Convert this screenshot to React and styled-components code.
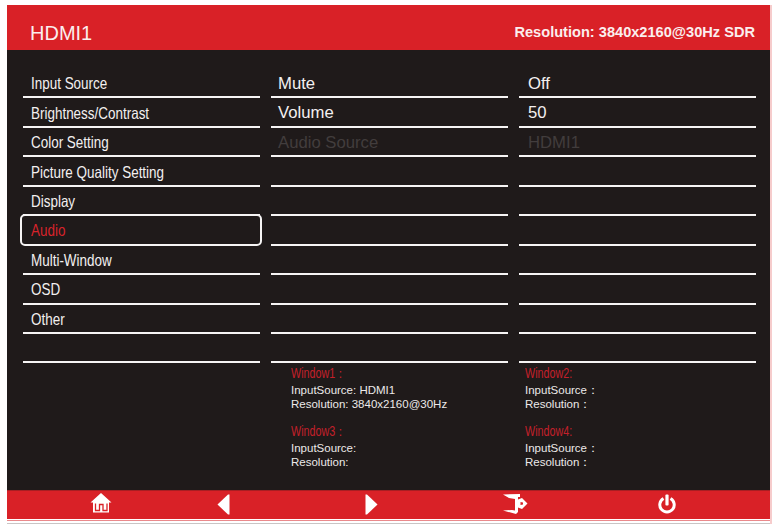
import React from "react"
import styled, { createGlobalStyle } from "styled-components"

const Global = createGlobalStyle`
  html, body {
    margin: 0;
    padding: 0;
    background: #fff;
  }
  body {
    font-family: "Liberation Sans", Arial, sans-serif;
  }
`

const Page = styled.div`
  width: 778px;
  height: 530px;
  padding: 5px 6px 0 7px;
  box-sizing: border-box;
  overflow: hidden;
`

const Screen = styled.div`
  height: 519px;
  display: flex;
  flex-direction: column;
  background: #1f1a1a;
  border-right: 2px solid #f6cccc;
`

const TopBar = styled.header`
  height: 45px;
  flex: none;
  display: flex;
  align-items: center;
  justify-content: space-between;
  padding: 11px 15px 0 23px;
  box-sizing: border-box;
  background: #d92127;
  color: #fbeeee;
`

const SourceName = styled.span`
  font-size: 20px;
`

const ResolutionInfo = styled.span`
  font-size: 14.6px;
  font-weight: bold;
  position: relative;
  top: -1px;
`

const Body = styled.main`
  flex: 1;
  display: grid;
  grid-template-columns: 236.5px 236.5px 236.5px;
  column-gap: 11.5px;
  padding: 19px 0 0 16px;
  position: relative;
`

const Column = styled.div`
  display: flex;
  flex-direction: column;
`

const Row = styled.div`
  height: 29.44px;
  box-sizing: border-box;
  display: flex;
  align-items: center;
  padding: 2px 0 0 ${(p) => p.$indent}px;
  border-bottom: 2px solid #f6f4f4;
  font-size: ${(p) => p.$size}px;
  color: ${(p) => (p.$dim ? "#423d3d" : "#f3f0f0")};
  white-space: nowrap;
`

const MenuText = styled.span`
  display: inline-block;
  transform: scaleX(0.815);
  transform-origin: left center;
`

const SelectedRow = styled(Row)`
  color: #d8232b;
  position: relative;
  border-bottom-color: transparent;

  &::after {
    content: "";
    position: absolute;
    inset: -2px -2px -2px -3px;
    border: 2px solid #f6f4f4;
    border-radius: 5px;
  }
`

const WindowGrid = styled.section`
  position: absolute;
  left: 284px;
  top: 315px;
  display: grid;
  grid-template-columns: 234px 120px;
  row-gap: 12px;
`

const WindowBlock = styled.div`
  display: flex;
  flex-direction: column;
  font-size: 11.5px;
  line-height: 14px;
  color: #ece9e9;
`

const WindowTitle = styled.span`
  color: #c3202a;
  font-size: 14px;
  line-height: 17px;
  margin-bottom: 1px;
  transform: scaleX(0.77);
  transform-origin: left center;
`

const BottomBar = styled.footer`
  height: 29px;
  flex: none;
  position: relative;
  background: #d92127;
  border-top: 1px solid #a81e22;
  box-sizing: border-box;
`

const EdgeLines = styled.div`
  height: 5px;
  flex: none;
  background: linear-gradient(
    #fff 0 1px,
    #ea8a8c 1px 2px,
    #fff 2px 4px,
    #c9c5c5 4px 5px
  );
`

const BarIcon = styled.svg`
  position: absolute;
  left: ${(p) => p.$x}px;
  top: ${(p) => p.$y}px;
  fill: #fff;
`

const HomeIcon = () => (
  <BarIcon $x={83} $y={2} width="22" height="20" viewBox="0 0 22 20">
    <path d="M11 0 L21.5 9.5 L19 9.5 L19 19.5 L3 19.5 L3 9.5 L0.5 9.5 Z" />
    <path
      d="M5.5 10.5 V17.5 H9.5 V11.5 H13 V17.5 H17 V10.5"
      fill="none"
      stroke="#d92127"
      strokeWidth="1.3"
    />
  </BarIcon>
)

const LeftIcon = () => (
  <BarIcon $x={210} $y={3} width="13" height="21" viewBox="0 0 13 21">
    <path d="M12.5 0.5 V20.5 L11 20.5 L0.5 10.5 L11 0.5 Z" />
  </BarIcon>
)

const RightIcon = () => (
  <BarIcon $x={358} $y={3} width="13" height="21" viewBox="0 0 13 21">
    <path d="M0.5 0.5 V20.5 L2 20.5 L12.5 10.5 L2 0.5 Z" />
  </BarIcon>
)

const ExitIcon = () => (
  <BarIcon $x={496} $y={3} width="25" height="21" viewBox="0 0 25 21">
    <path d="M0 0.5 L17 0 L17 3 L15 3 L15 18 L13 20 L0 16.5 L9 16 L12 16.5 L12 5 L6 4 Z" />
    <path d="M15 5.5 L19 4 L24.5 9.5 L19 15 L15 13.5 Z M17.5 8 L17.5 11 L20 10.5 L20 8.5 Z" fillRule="evenodd" />
  </BarIcon>
)

const PowerIcon = () => (
  <BarIcon $x={651} $y={3} width="18" height="20" viewBox="0 0 18 20">
    <path
      d="M5.5 4.5 A7.2 7.2 0 1 0 12.5 4.5"
      fill="none"
      stroke="#fff"
      strokeWidth="3"
    />
    <rect x="7.4" y="0.5" width="3.2" height="11" rx="1" />
  </BarIcon>
)

const menu = [
  "Input Source",
  "Brightness/Contrast",
  "Color Setting",
  "Picture Quality Setting",
  "Display",
  "Audio",
  "Multi-Window",
  "OSD",
  "Other",
  "",
]

const settings = [
  ["Mute", "Off"],
  ["Volume", "50"],
  ["Audio Source", "HDMI1", true],
]

const windows = [
  { title: "Window1：", source: "InputSource: HDMI1", res: "Resolution: 3840x2160@30Hz" },
  { title: "Window2:", source: "InputSource：", res: "Resolution：" },
  { title: "Window3：", source: "InputSource:", res: "Resolution:" },
  { title: "Window4:", source: "InputSource：", res: "Resolution：" },
]

const App = () => (
  <Page>
    <Global />
    <Screen>
      <TopBar>
        <SourceName>HDMI1</SourceName>
        <ResolutionInfo>Resolution: 3840x2160@30Hz SDR</ResolutionInfo>
      </TopBar>
      <Body>
        <Column>
          {menu.map((item) =>
            item === "Audio" ? (
              <SelectedRow key={item} $indent={8} $size={16.5}>
                <MenuText>{item}</MenuText>
              </SelectedRow>
            ) : (
              <Row key={item} $indent={8} $size={16.5}>
                <MenuText>{item}</MenuText>
              </Row>
            )
          )}
        </Column>
        <Column>
          {menu.map((_, i) => (
            <Row key={i} $indent={7} $size={16.7} $dim={settings[i]?.[2]}>
              {settings[i]?.[0]}
            </Row>
          ))}
        </Column>
        <Column>
          {menu.map((_, i) => (
            <Row key={i} $indent={9} $size={16.7} $dim={settings[i]?.[2]}>
              {settings[i]?.[1]}
            </Row>
          ))}
        </Column>
        <WindowGrid>
          {windows.map((w) => (
            <WindowBlock key={w.title}>
              <WindowTitle>{w.title}</WindowTitle>
              <span>{w.source}</span>
              <span>{w.res}</span>
            </WindowBlock>
          ))}
        </WindowGrid>
      </Body>
      <BottomBar>
        <HomeIcon />
        <LeftIcon />
        <RightIcon />
        <ExitIcon />
        <PowerIcon />
      </BottomBar>
      <EdgeLines />
    </Screen>
  </Page>
)

export default App
